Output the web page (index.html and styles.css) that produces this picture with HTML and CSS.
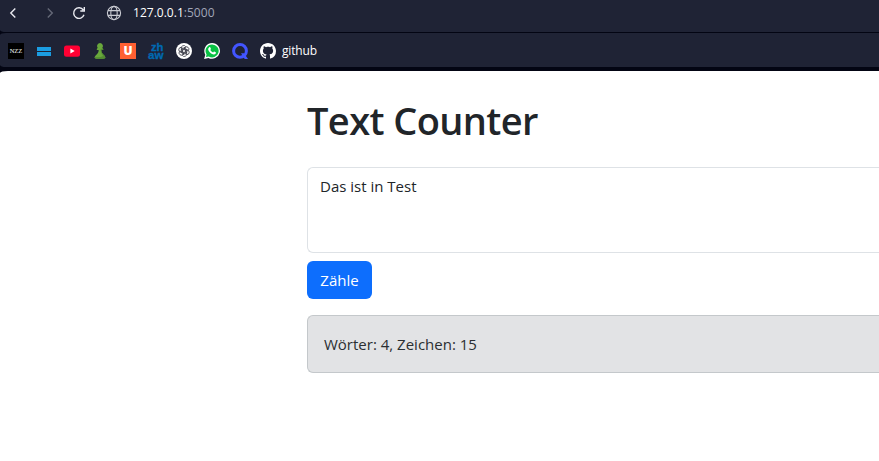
FILE: index.html
```html
<!DOCTYPE html>
<html lang="de">
<head>
<meta charset="utf-8">
<title>Text Counter</title>
<link rel="stylesheet" href="styles.css">
</head>
<body>
<header class="browser">
  <nav class="toolbar">
    <svg class="back" width="16" height="16" viewBox="0 0 16 16"><path d="M10.3 3.4 5.8 8l4.5 4.6"/></svg>
    <svg class="forward" width="16" height="16" viewBox="0 0 16 16"><path d="M5.8 3.4 10.3 8l-4.5 4.6"/></svg>
    <svg class="reload" width="16" height="16" viewBox="0 0 16 16"><path d="M13 9.800A5.300 5.300 0 1 1 12.300 5M13.300 2v4H9.300"/></svg>
    <svg class="globe" width="16" height="16" viewBox="0 0 16 16"><circle cx="8" cy="8" r="6.600"/><ellipse cx="8" cy="8" rx="3.200" ry="6.600"/><path d="M2 5.600h12M2 10.400h12"/></svg>
    <div class="url"><span class="host">127.0.0.1</span><span class="port">:5000</span></div>
  </nav>
  <nav class="bookmarks">
    <span class="nzz">NZZ</span>
    <svg width="16" height="16" viewBox="0 0 16 16"><path fill="#1b9de2" d="M1 4h14v4H1zM1 9h14v4H1z"/></svg>
    <svg width="16" height="16" viewBox="0 0 16 16"><rect y="2.400" width="16" height="11.300" rx="2.500" fill="#ff0033"/><path fill="#fff" d="m6.400 5.600 4.300 2.500-4.300 2.500z"/></svg>
    <svg width="16" height="16" viewBox="0 0 16 16"><path fill="#69a83c" d="M8 0a3 3 0 0 0-2.300 4.800L4.800 6v1h1.900c-.1 2.200-.9 3.400-2.300 4.700C3 12.800 2.500 14 2.700 15c2 1.300 8.600 1.300 10.600 0 .2-1-.3-2.200-1.700-3.300-1.400-1.300-2.200-2.500-2.300-4.700h1.900V6l-.9-1.200A3 3 0 0 0 8 0z"/><path fill="#528b32" d="M9.300 7h1.900V6l-.9-1.200c0 .8-.6 1.300-1.800 1.700.3 3 1.300 4.600 2.600 6.200-1.600 1.500-5.400 1.800-8.400 1.300v1c2 1.300 8.600 1.300 10.600 0 .2-1-.3-2.200-1.700-3.300C10.200 10.400 9.400 9.200 9.300 7z"/></svg>
    <span class="udacity">U</span>
    <svg class="zhaw" width="16" height="16" viewBox="0 0 16 16"><text x="3" y="7.800" textLength="12.500" lengthAdjust="spacingAndGlyphs">zh</text><text x="0" y="15.600" textLength="15.500" lengthAdjust="spacingAndGlyphs">aw</text></svg>
    <svg width="16" height="16" viewBox="0 0 16 16"><circle cx="8" cy="8" r="8" fill="#fff"/><g fill="none" stroke="#252733" stroke-width=".7"><path id="petal" d="M5.300 9.600V5.100a2.400 2.400 0 0 1 4.400-1.500M6.600 8.800V6.500l3.600-2.100"/><use href="#petal" transform="rotate(60 8 8)"/><use href="#petal" transform="rotate(120 8 8)"/><use href="#petal" transform="rotate(180 8 8)"/><use href="#petal" transform="rotate(240 8 8)"/><use href="#petal" transform="rotate(300 8 8)"/></g></svg>
    <svg width="16" height="16" viewBox="0 0 16 16"><path fill="#fff" d="M8.100 0a7.900 7.900 0 0 0-6.800 11.800L.1 16l4.300-1.100A7.900 7.900 0 1 0 8.100 0z"/><path fill="#08c143" d="M8.100 1.400a6.500 6.500 0 0 0-5.500 10l-.7 2.700 2.800-.7a6.500 6.500 0 1 0 3.400-12z"/><path fill="#fff" d="M5.100 4.400c.4-.4 1-.4 1.200 0l.6 1.400c.2.500-.5.900-.6 1.200.7 1.300 1.600 2 2.800 2.500.4-.2.700-1 1.100-.9l1.500.7c.4.300.2 1-.1 1.400-1 1-2.500.8-4 0C6 9.800 4.800 8.300 4.300 6.900c-.3-1 .1-2 .8-2.500z"/></svg>
    <svg width="16" height="16" viewBox="0 0 16 16"><path fill="none" stroke="#4255ff" stroke-width="3" d="M8 1.500a6.400 6.400 0 1 1 0 12.800A6.400 6.400 0 1 1 8 1.500z"/><path fill="#4255ff" d="M9 10.300h3.100L16 16h-3.300z"/></svg>
    <svg width="16" height="16" viewBox="0 0 16 16"><path fill="#fff" d="M8 0C3.580 0 0 3.580 0 8c0 3.540 2.290 6.530 5.470 7.590.4.070.55-.17.55-.38 0-.19-.01-.82-.01-1.490-2.010.37-2.530-.49-2.690-.94-.09-.23-.48-.94-.82-1.130-.28-.15-.68-.52-.01-.53.63-.01 1.080.58 1.230.82.72 1.210 1.870.87 2.330.66.070-.52.28-.87.51-1.070-1.780-.2-3.640-.89-3.640-3.950 0-.87.31-1.590.82-2.150-.08-.2-.36-1.020.08-2.120 0 0 .67-.21 2.200.82.640-.18 1.320-.27 2-.27s1.360.09 2 .27c1.530-1.040 2.200-.82 2.200-.82.44 1.100.16 1.920.08 2.120.51.56.82 1.270.82 2.150 0 3.070-1.870 3.750-3.650 3.950.29.25.54.73.54 1.480 0 1.070-.01 1.930-.01 2.200 0 .21.15.46.55.38A8.010 8.010 0 0 0 16 8c0-4.420-3.580-8-8-8z"/></svg>
    <span class="label">github</span>
  </nav>
</header>
<main class="page">
  <h1>Text Counter</h1>
  <textarea class="input" spellcheck="false">Das ist in Test</textarea>
  <button class="submit">Zähle</button>
  <div class="result">Wörter: 4, Zeichen: 15</div>
</main>
</body>
</html>
```
FILE: styles.css
```css
* { box-sizing: border-box; }

body {
  margin: 0;
  height: 461px;
  overflow: hidden;
  background: #030513;
  color: #212529;
  font-family: "Open Sans", "Noto Sans", sans-serif;
}

.browser {
  height: 71px;
  background: #030513;
}

.toolbar, .bookmarks {
  display: flex;
  align-items: center;
  background: #1f2335;
}

.toolbar {
  height: 32px;
  padding: 0 0 7px 5px;
  margin-bottom: 1px;
  border-bottom-left-radius: 6px 2px;
}

.toolbar svg {
  flex: none;
  fill: none;
  stroke: #e9eaf0;
  stroke-width: 1.4;
}

.toolbar .forward { margin-left: 21px; stroke: #656978; }
.toolbar .reload { margin-left: 13px; }
.toolbar .globe { margin-left: 19px; stroke: #c9cbd2; stroke-width: 1.1; }

.url {
  margin-left: 11px;
  font-size: 12px;
  line-height: 16px;
  letter-spacing: 0.02px;
}

.host { color: #fff; font-weight: 500; }
.port { color: #a1a6b8; }

.bookmarks {
  height: 34px;
  gap: 12px;
  padding: 2px 0 0 8px;
  border-radius: 6px 0 0 6px / 2px 0 0 2px;
}

.bookmarks svg { flex: none; }

.nzz, .udacity {
  flex: none;
  width: 16px;
  height: 16px;
  text-align: center;
}

.nzz {
  background: #000;
  color: #fff;
  font: 6.5px/16px "Liberation Serif", serif;
}

.udacity {
  background: #ff6032;
  color: #fff;
  font: 800 12px/16px "Open Sans", sans-serif;
}

.bookmarks .zhaw {
  overflow: visible;
  fill: #0069b0;
  stroke: #0069b0;
  stroke-width: 0.3;
  font: bold 11px "Liberation Sans", sans-serif;
}

.label {
  margin-left: -6px;
  color: #fff;
  font-size: 12px;
  line-height: 16px;
  letter-spacing: -0.15px;
}

.page {
  display: flex;
  flex-direction: column;
  align-items: flex-start;
  height: 390px;
  padding: 25px 0 0 307px;
  border-top-left-radius: 8px 2px;
  background: #fff;
}

h1 {
  margin: 0 0 23px;
  font-size: 38px;
  font-weight: 600;
  line-height: 48px;
  letter-spacing: -0.6px;
}

.input {
  width: 100%;
  height: 86px;
  padding: 6px 12px;
  border: 1px solid #dee2e6;
  border-right: 0;
  border-radius: 6px 0 0 6px;
  background: #fff;
  color: #212529;
  font: 15px/24px "Open Sans", sans-serif;
  resize: none;
}

.submit {
  width: 65px;
  height: 38px;
  margin: 8px 0 16px;
  padding: 0;
  border: 0;
  border-radius: 6px;
  background: #0d6efd;
  color: #fff;
  font: 15px/24px "Open Sans", sans-serif;
}

.result {
  width: 100%;
  height: 58px;
  padding: 16px;
  border: 1px solid #c4c8cb;
  border-right: 0;
  border-radius: 6px 0 0 6px;
  background: #e2e3e5;
  color: #2b2f32;
  font-size: 15px;
  line-height: 24px;
}
```
